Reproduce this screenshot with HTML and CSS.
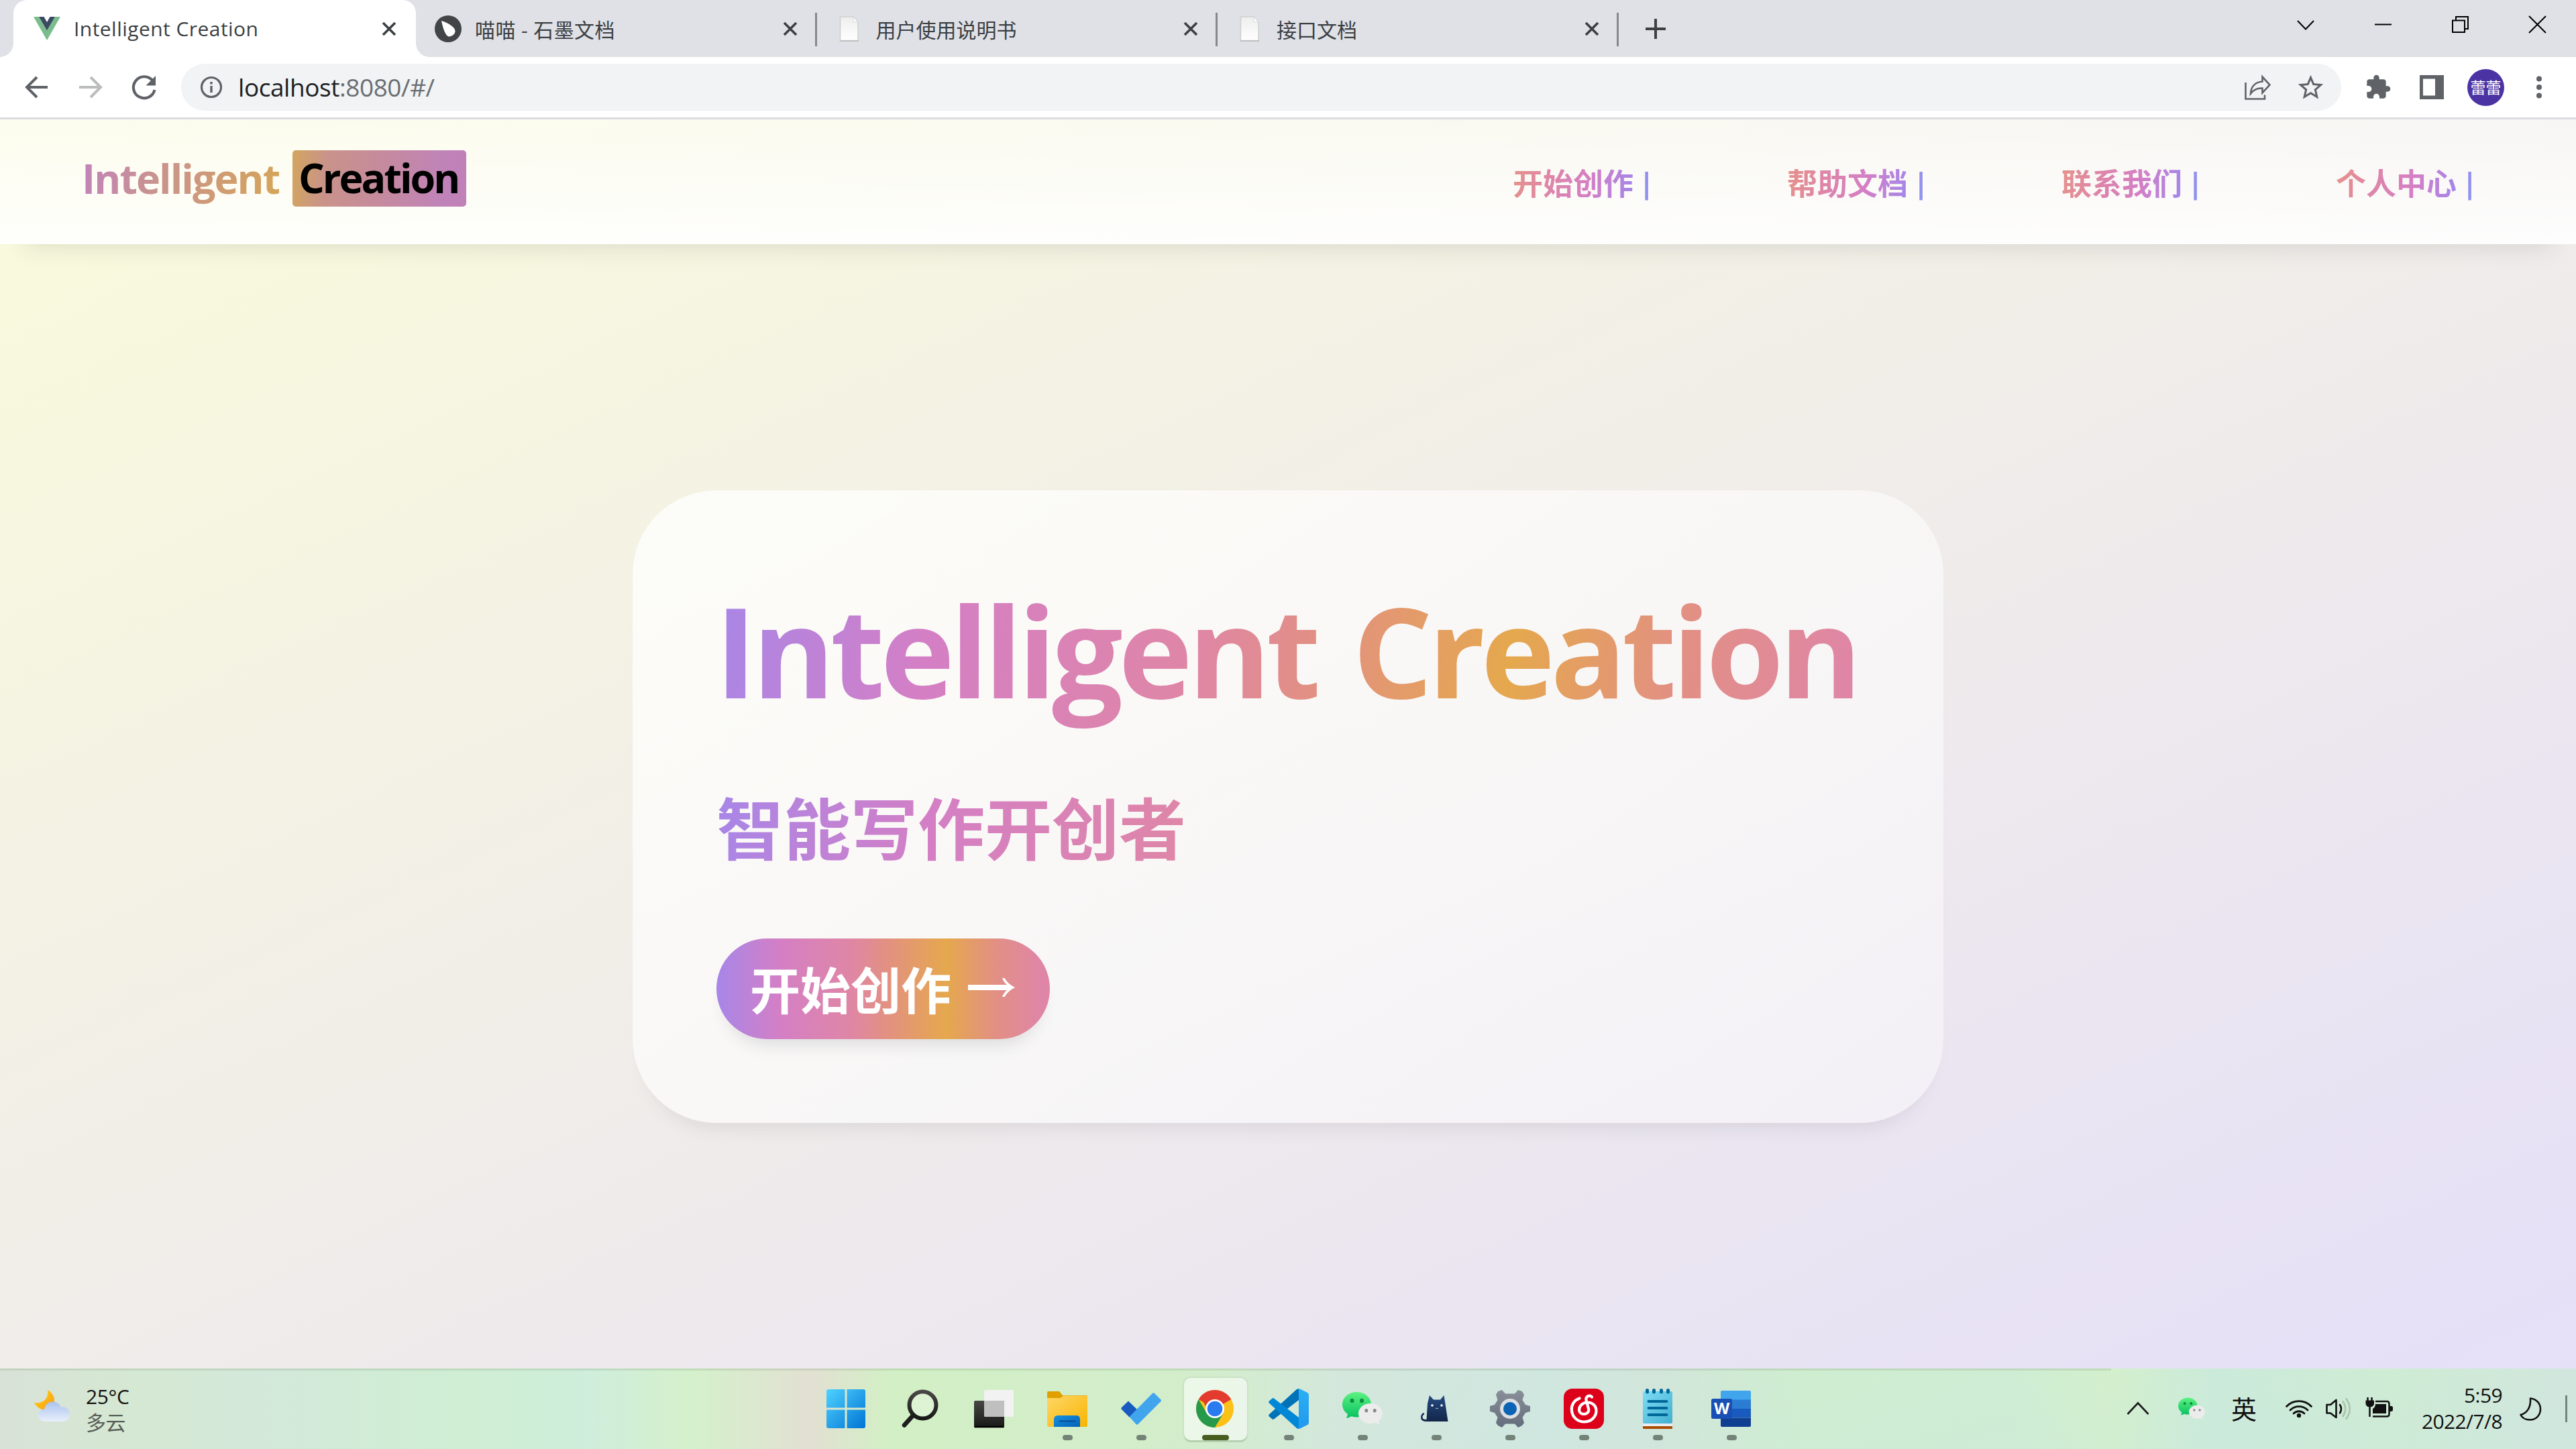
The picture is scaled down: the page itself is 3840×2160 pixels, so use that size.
FILE: index.html
```html
<!DOCTYPE html>
<html lang="zh-CN">
<head>
<meta charset="utf-8">
<title>Intelligent Creation</title>
<link rel="stylesheet" href="styles.css">
</head>
<body>
<svg class="defs" width="0" height="0">
  <defs>
    <linearGradient id="wcg" x1="0" y1="0" x2="0" y2="1"><stop offset="0" stop-color="#5df282"/><stop offset="1" stop-color="#07c160"/></linearGradient>
    <linearGradient id="win" x1="0" y1="0" x2="1" y2="1"><stop offset="0" stop-color="#4fd2ff"/><stop offset="1" stop-color="#0074d4"/></linearGradient>
    <linearGradient id="fold" x1="0" y1="0" x2="1" y2="1"><stop offset="0" stop-color="#ffd768"/><stop offset="1" stop-color="#f8b400"/></linearGradient>
    <linearGradient id="foldb" x1="0" y1="0" x2="1" y2="1"><stop offset="0" stop-color="#1593e0"/><stop offset="1" stop-color="#0560b6"/></linearGradient>
    <linearGradient id="dark" x1="0" y1="0" x2="0" y2="1"><stop offset="0" stop-color="#484745"/><stop offset="1" stop-color="#181818"/></linearGradient>
    <linearGradient id="gearg" x1="0" y1="0" x2="0" y2="1"><stop offset="0" stop-color="#8a9099"/><stop offset="1" stop-color="#646d7c"/></linearGradient>
    <linearGradient id="catg" x1="0" y1="0" x2="0" y2="1"><stop offset="0" stop-color="#234a80"/><stop offset="1" stop-color="#14264a"/></linearGradient>
    <linearGradient id="note" x1="0" y1="0" x2="1" y2="1"><stop offset="0" stop-color="#80dcf6"/><stop offset="1" stop-color="#42afd0"/></linearGradient>
    <linearGradient id="vsr" x1="0" y1="0" x2="0" y2="1"><stop offset="0" stop-color="#29b1f5"/><stop offset="1" stop-color="#2298ee"/></linearGradient>
    <linearGradient id="moong" x1="0" y1="0" x2="1" y2="1"><stop offset="0" stop-color="#ffd51f"/><stop offset="1" stop-color="#f99a0a"/></linearGradient>
    <linearGradient id="cloudg" x1="0" y1="0" x2="0" y2="1"><stop offset="0" stop-color="#a9c3ee"/><stop offset="1" stop-color="#e9effb"/></linearGradient>
    <linearGradient id="docg" x1="0" y1="0" x2="0" y2="1"><stop offset="0" stop-color="#eeeeee"/><stop offset="1" stop-color="#ffffff"/></linearGradient>
    <symbol id="wechat" viewBox="0 0 60 48">
      <path fill="url(#wcg)" d="M21.500 0C33.500 0 43 8.400 43 18.500S33.500 37.500 21.500 37.500C18.600 37.500 16 37 13.600 36.200L7.500 39C6.800 39.300 6.200 38.800 6.500 38L8 33C3 29.500 0 24.500 0 18.500C0 8.400 9.500 0 21.500 0Z"/>
      <ellipse cx="14.500" cy="13" rx="3" ry="3.200" fill="#0e8f3f"/><ellipse cx="29" cy="13" rx="3" ry="3.200" fill="#0e8f3f"/>
      <path fill="#ececec" d="M42 17C52 17 60 23.800 60 32C60 36.800 57.500 40.500 54 43.300L55 47C55.200 48 54.600 48.200 54 47.900L49.300 45.800C47 46.600 44.600 47 42 47C32 47 24 40.300 24 32S32 17 42 17Z"/>
      <ellipse cx="35.800" cy="27.800" rx="2.500" ry="2.700" fill="#8a8a8a"/><ellipse cx="48.200" cy="27.800" rx="2.500" ry="2.700" fill="#8a8a8a"/>
    </symbol>
    <symbol id="x" viewBox="0 0 22 22"><path d="M2 2L20 20M20 2L2 20" stroke="#3c4043" stroke-width="3.600" fill="none"/></symbol>
    <symbol id="doc" viewBox="0 0 30 40">
      <path d="M1.500 2H21L28 10V37.500H1.500Z" fill="url(#docg)" stroke="#cfcfcf" stroke-width="1.500"/><path d="M21 2V10H28Z" fill="#fff" stroke="#d5d5d5"/><path d="M1 38H29" stroke="#b9b9b9" stroke-width="1.500"/>
    </symbol>
  </defs>
</svg>

<div class="screen">
  <div class="tabstrip">
    <div class="tab tab-active">
      <svg class="fav" viewBox="0 0 40 36"><path fill="#7abd8c" d="M0 0H8L20 20.500L32 0H40L20 35Z"/><path fill="#3a4b61" d="M8 0H15.500L20 8L24.500 0H32L20 20.500Z"/></svg>
      <span class="tab-title">Intelligent Creation</span>
      <svg class="tab-close"><use href="#x"/></svg>
    </div>
    <div class="tab">
      <svg class="fav" viewBox="0 0 40 40"><circle cx="20" cy="20" r="20" fill="#414548"/><path fill="#fff" d="M10 8C20 11 30 17 30.500 23C31 28 25 32 20.500 31.500C15 29 12 17 10 8Z"/></svg>
      <span class="tab-title">喵喵 - 石墨文档</span>
      <svg class="tab-close"><use href="#x"/></svg>
    </div>
    <div class="tab">
      <svg class="fav"><use href="#doc"/></svg>
      <span class="tab-title">用户使用说明书</span>
      <svg class="tab-close"><use href="#x"/></svg>
    </div>
    <div class="tab">
      <svg class="fav"><use href="#doc"/></svg>
      <span class="tab-title">接口文档</span>
      <svg class="tab-close"><use href="#x"/></svg>
    </div>
    <svg class="newtab" viewBox="0 0 30 30"><path d="M15 1V29M1 15H29" stroke="#3c4043" stroke-width="4" stroke-linecap="round"/></svg>
    <div class="winctl">
      <svg viewBox="0 0 27 27"><path d="M1 8L13 20.500L25 8" fill="none" stroke="#000" stroke-width="2"/></svg>
      <svg viewBox="0 0 27 27"><path d="M1 13.500H26" stroke="#000" stroke-width="2"/></svg>
      <svg viewBox="0 0 27 27"><path d="M2 7.500H20V25H2ZM7 7V2H25V20H20.500" fill="none" stroke="#000" stroke-width="2"/></svg>
      <svg viewBox="0 0 27 27"><path d="M1 1L26 26M26 1L1 26" stroke="#000" stroke-width="2"/></svg>
    </div>
  </div>

  <div class="toolbar">
    <div class="navbtns">
      <svg viewBox="0 0 40 40"><path d="M36 20H6M20 5L5 20L20 35" fill="none" stroke="#5f6368" stroke-width="4"/></svg>
      <svg viewBox="0 0 40 40"><path d="M3 20H33M20 5L35 20L20 35" fill="none" stroke="#babcbe" stroke-width="4"/></svg>
      <svg viewBox="0 0 40 40"><path d="M33 11A16 16 0 1 0 35.500 24" fill="none" stroke="#5f6368" stroke-width="4.200"/><path d="M37 3V17.500H22.500Z" fill="#5f6368"/></svg>
    </div>
    <div class="omnibox">
      <svg class="info" viewBox="0 0 34 34"><circle cx="17" cy="17" r="14.500" fill="none" stroke="#5f6368" stroke-width="3.200"/><path d="M17 15V25M17 9V12.400" stroke="#5f6368" stroke-width="3.400"/></svg>
      <span class="url">localhost<span class="url-rest">:8080/#/</span></span>
      <svg class="share" viewBox="0 0 40 40"><path d="M2.500 13V37.500H31V31.500" fill="none" stroke="#5f6368" stroke-width="2.600"/><path d="M27.500 4.500L38.500 16.500L27.500 28.500V21.500C20 21 14 24 10 29.500C10.500 19 17 12.500 27.500 11.500Z" fill="none" stroke="#5f6368" stroke-width="2.600"/></svg>
      <svg class="star" viewBox="0 0 24 24"><path fill="#5f6368" d="M22 9.240l-7.190-.62L12 2 9.190 8.630 2 9.240l5.460 4.730L5.820 21 12 17.270 18.180 21l-1.630-7.030L22 9.240zM12 15.400l-3.760 2.270 1-4.280-3.320-2.880 4.380-.38L12 6.100l1.710 4.040 4.380.38-3.320 2.880 1 4.280L12 15.400z"/></svg>
    </div>
    <div class="actions">
      <svg viewBox="0 0 24 24"><path fill="#5f6368" d="M20.500 11H19V7c0-1.100-.9-2-2-2h-4V3.500C13 2.120 11.880 1 10.500 1S8 2.120 8 3.500V5H4c-1.100 0-1.990.9-1.990 2v3.800H3.500c1.490 0 2.700 1.210 2.700 2.700s-1.210 2.700-2.700 2.700H2V20c0 1.100.9 2 2 2h3.800v-1.500c0-1.490 1.210-2.700 2.700-2.700 1.490 0 2.700 1.210 2.700 2.700V22H17c1.100 0 2-.9 2-2v-4h1.500c1.380 0 2.500-1.120 2.500-2.500S21.880 11 20.500 11z"/></svg>
      <svg viewBox="0 0 40 40"><path fill="#5f6368" fill-rule="evenodd" d="M2 2H38V38H2ZM7 7.500V32.500H25V7.500Z"/></svg>
      <span class="avatar">蕾蕾</span>
      <svg viewBox="0 0 40 40"><circle cx="20" cy="7.500" r="4" fill="#5f6368"/><circle cx="20" cy="20" r="4" fill="#5f6368"/><circle cx="20" cy="32.500" r="4" fill="#5f6368"/></svg>
    </div>
  </div>

  <div class="page">
    <header class="site-head">
      <div class="logo"><span class="logo-a">Intelligent</span><span class="logo-b">Creation</span></div>
      <nav class="menu">
        <a class="menu-item">开始创作 <span class="pipe">|</span></a>
        <a class="menu-item">帮助文档 <span class="pipe">|</span></a>
        <a class="menu-item">联系我们 <span class="pipe">|</span></a>
        <a class="menu-item">个人中心 <span class="pipe">|</span></a>
      </nav>
    </header>
    <main class="stage">
      <section class="card">
        <h1 class="title">Intelligent Creation</h1>
        <h2 class="subtitle"><span>智能写作开创者</span></h2>
        <a class="cta">开始创作<svg class="arrow" viewBox="0 0 72 30"><path fill="#fff" d="M1 11H59C55.500 8 53.500 5 52 1H55.500C59 7 64 11.500 71 15C64 18.500 59 23 55.500 29H52C53.500 25 55.500 22 59 19H1Z"/></svg></a>
      </section>
    </main>
  </div>

  <div class="taskbar">
    <div class="weather">
      <svg viewBox="0 0 54 48"><path fill="url(#moong)" d="M20 0C31 6 33 19 26 27C18 33 5 29 0 19C12 21 22 14 20 0Z"/><path fill="url(#cloudg)" d="M6 37C6 32 10 29 15 29C16 22 21 17.500 28 17.500C34 17.500 38 21 40 26C47 24 53 29 53 36C53 43 48 47 43 47H16C10 47 6 43 6 37Z"/></svg>
      <div class="weather-text"><span>25°C</span><span class="dim">多云</span></div>
    </div>
    <div class="apps">
      <div class="app"><svg viewBox="0 0 60 60"><path fill="url(#win)" d="M1 4Q1 1 4 1H28.500V28.500H1ZM31.500 1H56Q59 1 59 4V28.500H31.500ZM1 31.500H28.500V59H4Q1 59 1 56ZM31.500 31.500H59V56Q59 59 56 59H31.500Z"/></svg></div>
      <div class="app"><svg viewBox="0 0 60 60"><circle cx="34.500" cy="24.500" r="20" fill="#fff" fill-opacity=".25" stroke="url(#dark)" stroke-width="6"/><path d="M20 40L7 54.500" stroke="#1d1d1d" stroke-width="6.500" stroke-linecap="round"/></svg></div>
      <div class="app"><svg viewBox="0 0 60 60"><rect x="1" y="18" width="45" height="40" rx="2" fill="url(#dark)"/><path d="M1.500 57H45.500" stroke="#000" stroke-width="2.500"/><rect x="16" y="2" width="44" height="40" rx="2" fill="#f2f2f2"/><path d="M16 18H46V42H18Q16 42 16 40Z" fill="#bfbfbf"/></svg></div>
      <div class="app running"><svg viewBox="0 0 60 60"><path fill="#e0a100" d="M0 6Q0 4 2 4H18L23 10H58Q60 10 60 12V20H0Z"/><path fill="url(#fold)" d="M0 14H20L24 10.500H60V55Q60 57 58 57H2Q0 57 0 55Z"/><path fill="url(#foldb)" d="M10 57V46Q10 40 16 40H44Q49 40 49 46V57Z"/><path d="M18 48.500H42" stroke="#0b4a94" stroke-width="2"/></svg></div>
      <div class="app running"><svg viewBox="0 0 60 60"><path fill="#185abd" d="M11 18.500L24 31L13 43L1 31Q-.5 29.500 1 28Z"/><path fill="#41a5ee" d="M12.500 42L47 7Q48.500 5.500 50 7L59.500 16.500Q60.500 18 59.500 19L25.500 53Q24 54.500 22.500 53Z"/></svg></div>
      <div class="app running current"><svg viewBox="0 0 60 60"><circle cx="30" cy="30" r="28" fill="#fbc116"/><path fill="#e33b2e" d="M30 30L5.750 16A28 28 0 0 1 54.250 16Z"/><path fill="#e33b2e" d="M30 16H54.250L50 12L10 14L18 30Z"/><path fill="#269a4a" d="M5.750 16A28 28 0 0 0 30 58L42.500 37L18 37Z"/><circle cx="30" cy="30" r="14" fill="#fff"/><circle cx="30" cy="30" r="11.300" fill="#2b7bf0"/></svg></div>
      <div class="app running"><svg viewBox="0 0 60 60"><path fill="#0072b8" d="M45 0V17L8 45.500Q6.500 46.500 5 45L.8 41.500Q-.6 40 .8 38.500L42 1Z"/><path fill="#0088d6" d="M45 60V43L8 14.500Q6.500 13.500 5 15L.8 18.500Q-.6 20 .8 21.500L42 59Z"/><path fill="url(#vsr)" d="M42 59Q44 60.500 47 59.500L58 54Q60 53 60 50.500V9.500Q60 7 58 6L47 .5Q44-.5 42 1Q45 0 45 3V57Q45 60 42 59Z"/></svg></div>
      <div class="app running"><svg viewBox="0 0 60 60"><use href="#wechat" x="0" y="5" width="60" height="48"/></svg></div>
      <div class="app running"><svg viewBox="0 0 60 60"><path fill="url(#catg)" d="M20 10L26 16.500H36L41.500 10L44 26L47.500 49H16Q7 49 7 43Q7 37 12 36V38.500Q9.500 39.500 9.500 43Q10 46.500 15.500 46L17 22Z"/><circle cx="24" cy="25" r="1.800" fill="#fff"/><circle cx="38" cy="25" r="1.800" fill="#fff"/><path d="M29 29.500H33" stroke="#9ab" stroke-width="1.200"/></svg></div>
      <div class="app running"><svg viewBox="0 0 60 60"><path fill="url(#gearg)" d="M12 4L18 2L23 7.500H37L42 2L48 4L51 9L48.500 17L53 24L60 26V34L53 36L48.500 43L51 51L48 55L42 58L37 52.500H23L18 58L12 55L9 51L11.500 43L7 36L0 34V26L7 24L11.500 17L9 9Z"/><circle cx="30" cy="30" r="15" fill="#dcdfe4"/><circle cx="30" cy="30" r="10" fill="#0a63b4"/></svg></div>
      <div class="app running"><svg viewBox="0 0 60 60"><rect width="60" height="60" rx="13" fill="#dd001b"/><path d="M23.500 14.500C15 17.500 11 25 12 33C13 43 21 49.500 30.500 49.500C41 49.500 48.500 42 48.500 33C48.500 26 43 20.500 35.500 20.500C28 20.500 23 26 23 31.500C23 35.500 26 38 30 38C35 38 38 34.500 37 30L33.500 17C32.500 12 38 8.500 42 12.500" fill="none" stroke="#fff" stroke-width="4.200" stroke-linecap="round"/></svg></div>
      <div class="app running"><svg viewBox="0 0 60 60"><rect x="8" y="50" width="44" height="10" rx="1.500" fill="#a84c00"/><rect x="8" y="46" width="44" height="10" fill="#ecebf0"/><rect x="8" y="4" width="44" height="48" rx="2" fill="url(#note)"/><path d="M14.500 2.500V5M24.500 2.500V5M35.500 2.500V5M45.500 2.500V5" stroke="#00699a" stroke-width="5" stroke-linecap="round"/><path d="M16.500 19H43.500M16.500 29H43.500M16.500 39H43.500" stroke="#00699a" stroke-width="4" stroke-linecap="round"/></svg></div>
      <div class="app running"><svg viewBox="0 0 60 60"><path fill="#41a5ee" d="M14 5Q14 3 16 3H57Q59 3 59 5V17H14Z"/><path fill="#2b7cd3" d="M14 16.500H59V30H14Z"/><path fill="#185abd" d="M14 30H59V43.500H14Z"/><path fill="#103f91" d="M14 43.500H59V55Q59 57 57 57H16Q14 57 14 55Z"/><rect x="0" y="15" width="31" height="30" rx="2.500" fill="#184fb5"/><text class="wordw" x="15.500" y="38" text-anchor="middle">W</text></svg></div>
    </div>
    <div class="tray">
      <svg class="slot" viewBox="0 0 80 60"><path d="M24.500 38L40 21.500L55.500 38" fill="none" stroke="#1a1a1a" stroke-width="2.600"/></svg>
      <svg class="slot" viewBox="0 0 80 60"><use href="#wechat" x="20" y="13" width="40" height="33"/></svg>
      <span class="slot ime">英</span>
      <svg class="slot wifi" viewBox="0 0 60 60"><g fill="none" stroke="#111" stroke-width="2.800" stroke-linecap="round"><path d="M11.500 26.500A25.500 25.500 0 0 1 48.500 26.500"/><path d="M17 32A18.500 18.500 0 0 1 43 32"/><path d="M22 37A11.500 11.500 0 0 1 38 37"/></g><circle cx="30" cy="40" r="3.200" fill="#111"/></svg>
      <svg class="slot sm" viewBox="0 0 60 60"><path d="M11.500 24H17L25.500 17V43L17 36.500H11.500Z" fill="none" stroke="#111" stroke-width="2.600" stroke-linejoin="round"/><path d="M31 24Q35 30 31 36.500" fill="none" stroke="#111" stroke-width="2.600" stroke-linecap="round"/><path d="M35.500 19Q43 30 35.500 41.500M40.500 15Q51 30 40.500 45" fill="none" stroke="#a9c4a9" stroke-width="2.500" stroke-linecap="round"/></svg>
      <svg class="slot sm" viewBox="0 0 60 60"><path d="M12.500 13V18M18.500 13V18M15.500 26V42" stroke="#111" stroke-width="2.500"/><path d="M9.500 17.500H22V22Q22 27 15.700 27.500Q9.500 27 9.500 22Z" fill="#111"/><path d="M24 19H41Q44.500 19 44.500 22.500V38Q44.500 41.500 41 41.500H20" fill="none" stroke="#111" stroke-width="2.500"/><path d="M24 23H40V37H20V30Q24 28 24 23Z" fill="#111"/><path d="M45 26H47.500Q50 26 50 28V32Q50 34 47.500 34H45Z" fill="#111"/></svg>
      <div class="clock"><span>5:59</span><span>2022/7/8</span></div>
      <svg class="slot moon" viewBox="0 0 60 60"><path d="M30 14.500C39 15.500 45 22 45 30.500C45 40 38 46.500 29.500 46.500C23 46.500 17.500 43.500 15.500 39C25 36.500 31 28 30 14.500Z" fill="none" stroke="#111" stroke-width="2.600" stroke-linejoin="round"/></svg>
      <span class="peek"></span>
    </div>
  </div>
</div>
</body>
</html>
```
FILE: styles.css
```css
* { box-sizing: border-box; }
body { margin: 0; font-family: "Open Sans", "Noto Sans CJK SC", sans-serif; }
svg { display: block; flex: none; }
.defs { position: absolute; }
.screen { width: 3840px; height: 2160px; display: flex; flex-direction: column; overflow: hidden; }

/* Browser tabs */
.tabstrip { height: 85px; flex: none; background: #dfe1e6; display: flex; align-items: center; padding-left: 20px; }
.tab { width: 597.500px; height: 85px; display: flex; align-items: center; padding: 0 29px 0 28px; background: linear-gradient(#85888d, #85888d) right 0 top 19px / 3px 50px no-repeat; }
.tab-active { width: 600px; padding-left: 30px; background: #fff; border-radius: 20px 20px 0 0; position: relative; }
.tab-active::before, .tab-active::after { content: ""; position: absolute; bottom: 0; width: 20px; height: 20px; }
.tab-active::before { left: -20px; background: radial-gradient(circle at 0 0, transparent 19.500px, #fff 20px); }
.tab-active::after { right: -20px; background: radial-gradient(circle at 100% 0, transparent 19.500px, #fff 20px); }
.fav { width: 40px; height: 40px; }
.tab-title { flex: 1; margin-left: 20px; font-size: 30px; color: #3c4043; white-space: nowrap; }
.tab-active .tab-title { letter-spacing: .45px; }
.tab:nth-child(2) .tab-title { letter-spacing: .4px; }
.tab-close { width: 22px; height: 22px; }
.newtab { width: 30px; height: 30px; margin-left: 40px; }
.winctl { margin-left: auto; display: flex; gap: 88px; padding-right: 44px; align-self: flex-start; padding-top: 23px; }
.winctl svg { width: 27px; height: 27px; }

/* Address bar */
.toolbar { height: 93px; flex: none; background: #fff; border-bottom: 3px solid #dadce0; display: flex; align-items: center; padding-left: 35px; }
.navbtns { display: flex; gap: 40px; width: 235px; flex: none; }
.navbtns svg { width: 40px; height: 40px; }
.omnibox { width: 3220px; flex: none; height: 70px; border-radius: 35px; background: #f1f3f4; display: flex; align-items: center; padding: 0 23px 0 28px; }
.info { width: 34px; height: 34px; }
.url { flex: 1; margin-left: 23px; font-size: 37px; line-height: 50px; color: #202124; letter-spacing: -.45px; }
.url-rest { color: #6a6e73; }
.share { width: 40px; height: 40px; margin-right: 37px; }
.star { width: 45px; height: 45px; }
.actions { display: flex; align-items: center; padding-left: 35px; }
.actions svg { width: 40px; height: 40px; margin-right: 40px; }
.actions svg:last-child { margin-right: 0; }
.avatar { width: 55px; height: 55px; flex: none; border-radius: 50%; background: #4b33a4; color: #fff; font-size: 23px; line-height: 53px; text-align: center; margin: 0 32px 0 -7px; font-family: "Noto Sans CJK SC", sans-serif; white-space: nowrap; }

/* Web page */
.page { flex: 1; min-height: 0; display: flex; flex-direction: column; background: linear-gradient(155deg, #fafbdb 0%, #f1eee8 45%, #eeeaec 60%, #e8e3f3 85%, #e5dff8 100%); }
.site-head { height: 186px; flex: none; display: flex; align-items: center; justify-content: space-between; padding: 0 24px 0 122px; background: linear-gradient(rgba(255, 255, 255, .5), rgba(255, 255, 255, .9)); box-shadow: 0 38px 34px -37px rgba(40, 50, 50, .15); }
.logo { display: flex; align-items: center; font-size: 61px; font-weight: 700; line-height: 82px; padding-bottom: 10px; letter-spacing: -1.950px; }
.logo-a { width: 294px; background: linear-gradient(100deg, #c183bb, #c9938f 38%, #cf9b75 68%, #d4a45c 95%); -webkit-background-clip: text; background-clip: text; color: transparent; white-space: nowrap; }
.logo-b { margin-left: 20px; width: 259px; padding: 0 0 0 9px; height: 84px; border-radius: 5px; color: #000; background: linear-gradient(95deg, #d3a55f, #c9938b 20%, #c68b9b 48%, #c083b8 85%, #c080b8); letter-spacing: -3px; white-space: nowrap; }
.menu { display: flex; }
.menu-item { width: 409px; padding-left: 75px; font-size: 45px; font-weight: 700; line-height: 66px; white-space: nowrap; padding-top: 5px; background: linear-gradient(100deg, #e5938a 75px, #df86a6 130px, #d47fc5 195px, #a786e8 255px, #8f93ee 280px); -webkit-background-clip: text; background-clip: text; color: transparent; }
.pipe { margin-left: -4px; font-size: 43px; vertical-align: 2px; line-height: 1; }
.stage { flex: 1; display: flex; justify-content: center; align-items: flex-start; padding-top: 367px; }
.card { width: 1954px; height: 943px; border-radius: 125px; padding: 113px 125px 125px; background: linear-gradient(145deg, rgba(255, 255, 255, .78), rgba(255, 255, 255, .4)); box-shadow: 0 28px 30px -24px rgba(60, 60, 70, .13); display: flex; flex-direction: column; align-items: flex-start; }
.title, .subtitle { margin: 0; width: 1704px; background: linear-gradient(100deg, #a786e8 0, #d47fc5 19%, #df86a6 42%, #e28f85 52%, #e5a84d 69%, #e28f85 84%, #df86a6 98%); -webkit-background-clip: text; background-clip: text; color: transparent; white-space: nowrap; }
.title { font-size: 187px; line-height: 250px; letter-spacing: -6.500px; word-spacing: 12px; text-indent: -2px; }
.subtitle { font-size: 100px; line-height: 150px; margin-top: 62px; font-family: "Noto Sans CJK SC", sans-serif; }
.cta { display: flex; width: 497px; height: 150px; border-radius: 75px; margin-top: 93px; padding-left: 50px; font-size: 75px; font-weight: 700; line-height: 155px; color: #fff; white-space: nowrap; background: linear-gradient(90deg, #a786e8 0, #d47fc5 19%, #df86a6 40%, #e28f85 50%, #e5a84d 69%, #e28f85 84%, #df86a6 97%); box-shadow: 0 22px 25px -14px rgba(60, 60, 70, .14); }
.arrow { width: 72px; height: 30px; margin: 58px 0 0 24px; }

/* Taskbar */
.taskbar { height: 120px; flex: none; display: grid; grid-template-columns: 1fr auto 1fr; color: #111; background: linear-gradient(rgba(120, 150, 110, .22), rgba(120, 150, 110, .22)) 0 0 / 3147px 3px no-repeat, linear-gradient(170deg, transparent 50%, rgba(203, 232, 226, .55)), linear-gradient(90deg, #d8e2d8 0, #d5e8d2 5%, #d3e8da 10%, #cfeed3 18%, #cfeedb 23%, #d5f0cb 27%, #e2e0d2 31.500%, #d2efc5 34.500%, #d3edcc 47%, #d4e7dc 52%, #d0e7e0 60%, #d2e5da 64%, #cfeecd 70%, #cfeed0 78%, #d5f1c6 82%, #cbebd7 86%, #d0edcd 93%, #d5e5da 100%); }
.weather { display: flex; padding: 32px 0 0 51px; }
.weather svg { width: 54px; height: 48px; }
.weather-text, .clock { display: flex; flex-direction: column; font-size: 30px; line-height: 39px; }
.weather-text { margin: -10px 0 0 23px; letter-spacing: -.4px; }
.dim { color: #575d56; }
.apps { display: flex; padding-left: 1px; }
.app { width: 110px; height: 120px; padding: 30px 25px 0; position: relative; }
.app svg { width: 60px; height: 60px; position: relative; overflow: visible; }
.running::after { content: ""; position: absolute; left: 48px; top: 99px; width: 15px; height: 8px; border-radius: 4px; background: #748377; }
.current::before { content: ""; position: absolute; left: 9px; top: 14px; width: 94px; height: 93px; border-radius: 10px; background: rgba(255, 255, 255, .55); box-shadow: 0 0 0 2px rgba(120, 150, 120, .1), 0 3px 0 rgba(100, 130, 100, .22); }
.current::after { left: 36px; width: 40px; background: #475e20; }
.wordw { font: 700 24px "Open Sans", sans-serif; fill: #fff; }
.tray { display: flex; justify-content: flex-end; align-items: flex-start; padding-top: 30px; }
.slot { width: 80px; height: 60px; }
.ime { font: 38px/57px "Noto Sans CJK SC", sans-serif; text-align: center; padding-right: 4px; }
.wifi { width: 60px; margin-left: 10px; }
.sm, .moon { width: 60px; }
.clock { width: 153px; text-align: right; margin-top: -10px; letter-spacing: -.6px; }
.moon { margin-left: 12px; }
.peek { width: 3px; height: 40px; background: #76857a; margin: 10px 13px 0 22px; }
```
